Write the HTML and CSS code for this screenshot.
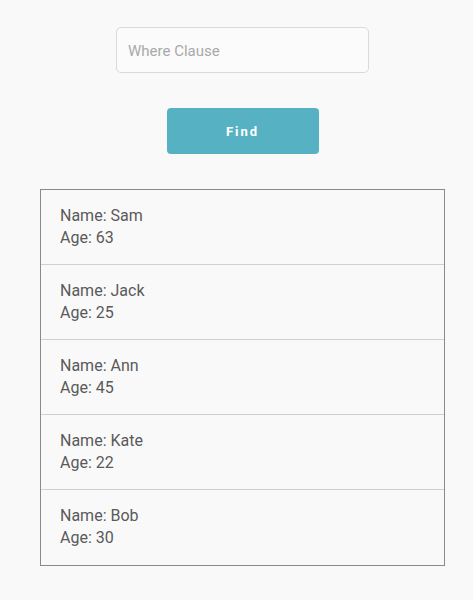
FILE: index.html
```html
<!DOCTYPE html>
<html>
<head>
<meta charset="utf-8">
<link rel="stylesheet" href="styles.css">
</head>
<body>
<div class="page">
  <input class="where" type="text" placeholder="Where Clause">
  <button class="find">Find</button>
  <ul class="list">
    <li class="row"><div>Name: Sam</div><div>Age: 63</div></li>
    <li class="row"><div>Name: Jack</div><div>Age: 25</div></li>
    <li class="row"><div>Name: Ann</div><div>Age: 45</div></li>
    <li class="row"><div>Name: Kate</div><div>Age: 22</div></li>
    <li class="row"><div>Name: Bob</div><div>Age: 30</div></li>
  </ul>
</div>
</body>
</html>
```
FILE: styles.css
```css
html, body {
  margin: 0;
  background: #f9f9f9;
}
body {
  font-family: Roboto, "Liberation Sans", sans-serif;
}
.page {
  padding: 27px 0 0 12px;
  display: flex;
  flex-direction: column;
  align-items: center;
}
.where {
  box-sizing: border-box;
  width: 253px;
  height: 46px;
  border: 1px solid #dadada;
  border-radius: 5px;
  background: #fbfbfb;
  padding: 2px 11px 0;
  font-family: Roboto, "Liberation Sans", sans-serif;
  font-size: 15px;
  color: #555;
  outline: none;
}
.where::placeholder {
  color: #a9a9a9;
}
.find {
  margin-top: 35px;
  width: 152px;
  height: 46px;
  border: none;
  border-radius: 4px;
  background: #56b2c3;
  color: #fff;
  font-family: Roboto, "Liberation Sans", sans-serif;
  font-weight: 700;
  font-size: 13px;
  letter-spacing: 2px;
}
.list {
  list-style: none;
  margin: 35px 0 0 0;
  padding: 0;
  width: 405px;
  box-sizing: border-box;
  border: 1px solid #8a8a8a;
}
.row {
  padding: 15px 19px;
  font-size: 16px;
  line-height: 22px;
  color: #5a5a5a;
  border-top: 1px solid #d0d0d0;
}
.row:first-child {
  border-top: none;
}
.row:last-child {
  padding-bottom: 16px;
}
```
